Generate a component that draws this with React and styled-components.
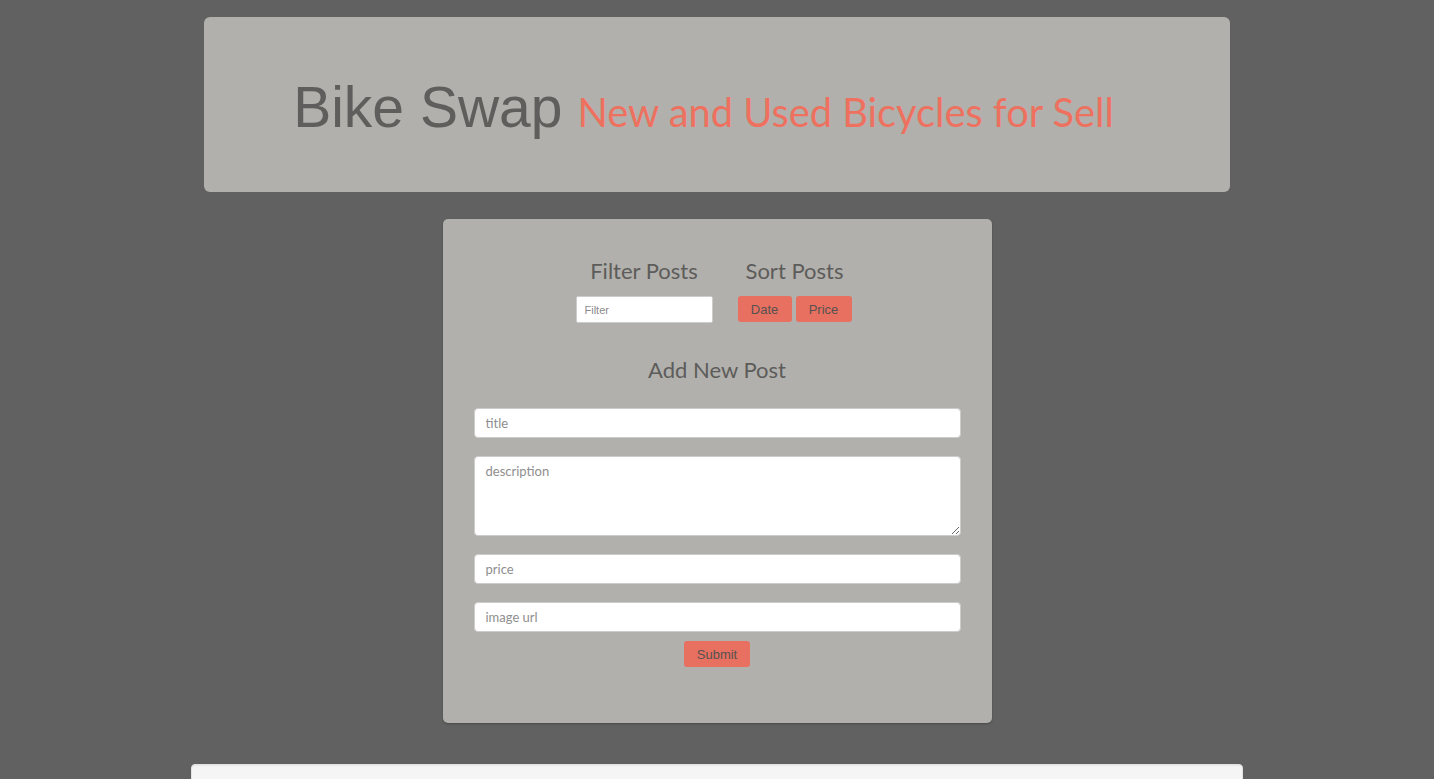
import React from "react";
import styled, { createGlobalStyle } from "styled-components";

const GlobalStyle = createGlobalStyle`
  html, body { margin: 0; padding: 0; }
  body {
    background: #616161;
    font-family: "Liberation Sans", Arial, sans-serif;
  }
  * { box-sizing: border-box; }
`;

const Page = styled.div`
  display: flex;
  flex-direction: column;
  align-items: center;
  padding-top: 17px;
  min-height: 779px;
`;

const Header = styled.header`
  width: 1026px;
  height: 175px;
  background: #b1b0ac;
  border-radius: 6px;
  display: flex;
  align-items: center;
  justify-content: center;
  padding: 6px 27px 0 0;
`;

const Title = styled.h1`
  margin: 0;
  font-family: "Liberation Sans", Arial, sans-serif;
  font-weight: 400;
  font-size: 57px;
  line-height: 1.1;
  color: #5f5e5c;
  white-space: nowrap;
`;

const Subtitle = styled.small`
  font-family: Lato, "Open Sans", sans-serif;
  font-weight: 400;
  font-size: 39.8px;
  color: #ee705f;
  margin-left: 15px;
`;

const Panel = styled.section`
  margin-top: 27px;
  width: 549px;
  height: 504px;
  background: #b1b0ac;
  border-radius: 5px;
  box-shadow: 0 1px 2px rgba(0, 0, 0, 0.25);
  padding: 31px;
  display: flex;
  flex-direction: column;
  align-items: center;
`;

const ControlsRow = styled.div`
  display: flex;
  justify-content: center;
  gap: 25px;
  margin-top: 7px;
  margin-right: 7px;
`;

const Column = styled.div`
  display: flex;
  flex-direction: column;
  align-items: center;
`;

const Heading = styled.h3`
  margin: 0 0 12px;
  font-family: Lato, "Open Sans", sans-serif;
  font-weight: 400;
  font-size: 22px;
  line-height: 27px;
  color: #5d5c5a;
  white-space: nowrap;
`;

const SmallInput = styled.input`
  width: 137px;
  height: 27px;
  border: 1px solid #ccc;
  border-radius: 2px;
  padding: 0 8px;
  font-family: "Liberation Sans", Arial, sans-serif;
  font-size: 11px;
  background: #fff;
  outline: none;
  &::placeholder { color: #8a8a8a; }
`;

const ButtonGroup = styled.div`
  display: flex;
  gap: 4px;
`;

const Button = styled.button`
  height: 26px;
  width: ${(p) => p.$w}px;
  border: none;
  border-radius: 3px;
  background: #e87060;
  color: #555250;
  font-family: "Liberation Sans", Arial, sans-serif;
  font-size: 13px;
  padding: 0;
  cursor: pointer;
`;

const AddHeading = styled(Heading)`
  margin-top: 33px;
  margin-bottom: 25px;
`;

const Form = styled.form`
  width: 100%;
  display: flex;
  flex-direction: column;
  align-items: center;
  gap: 18px;
`;

const Field = styled.input`
  width: 100%;
  height: 30px;
  border: 1px solid #ccc;
  border-radius: 4px;
  padding: 0 11px;
  background: #fff;
  font-family: Lato, "Open Sans", sans-serif;
  font-size: 13px;
  outline: none;
  &::placeholder { color: #8e8e8e; }
`;

const TextArea = styled.textarea`
  width: 100%;
  height: 80px;
  border: 1px solid #ccc;
  border-radius: 4px;
  padding: 6px 11px;
  background: #fff;
  font-family: Lato, "Open Sans", sans-serif;
  font-size: 13px;
  outline: none;
  resize: vertical;
  &::placeholder { color: #8e8e8e; }
`;

const Submit = styled(Button)`
  margin-top: -9px;
`;

const Well = styled.div`
  margin-top: 41px;
  width: 1052px;
  height: 40px;
  background: #f5f5f5;
  border: 1px solid #e3e3e3;
  border-radius: 4px 4px 0 0;
  box-shadow: inset 0 1px 1px rgba(0, 0, 0, 0.05);
`;

export default function App() {
  return (
    <>
      <GlobalStyle />
      <Page>
        <Header>
          <Title>
            Bike Swap<Subtitle>New and Used Bicycles for Sell</Subtitle>
          </Title>
        </Header>
        <Panel>
          <ControlsRow>
            <Column>
              <Heading>Filter Posts</Heading>
              <SmallInput placeholder="Filter" />
            </Column>
            <Column>
              <Heading>Sort Posts</Heading>
              <ButtonGroup>
                <Button $w={54}>Date</Button>
                <Button $w={56}>Price</Button>
              </ButtonGroup>
            </Column>
          </ControlsRow>
          <AddHeading>Add New Post</AddHeading>
          <Form onSubmit={(e) => e.preventDefault()}>
            <Field placeholder="title" />
            <TextArea placeholder="description" />
            <Field placeholder="price" />
            <Field placeholder="image url" />
            <Submit type="submit" $w={66}>Submit</Submit>
          </Form>
        </Panel>
        <Well />
      </Page>
    </>
  );
}
